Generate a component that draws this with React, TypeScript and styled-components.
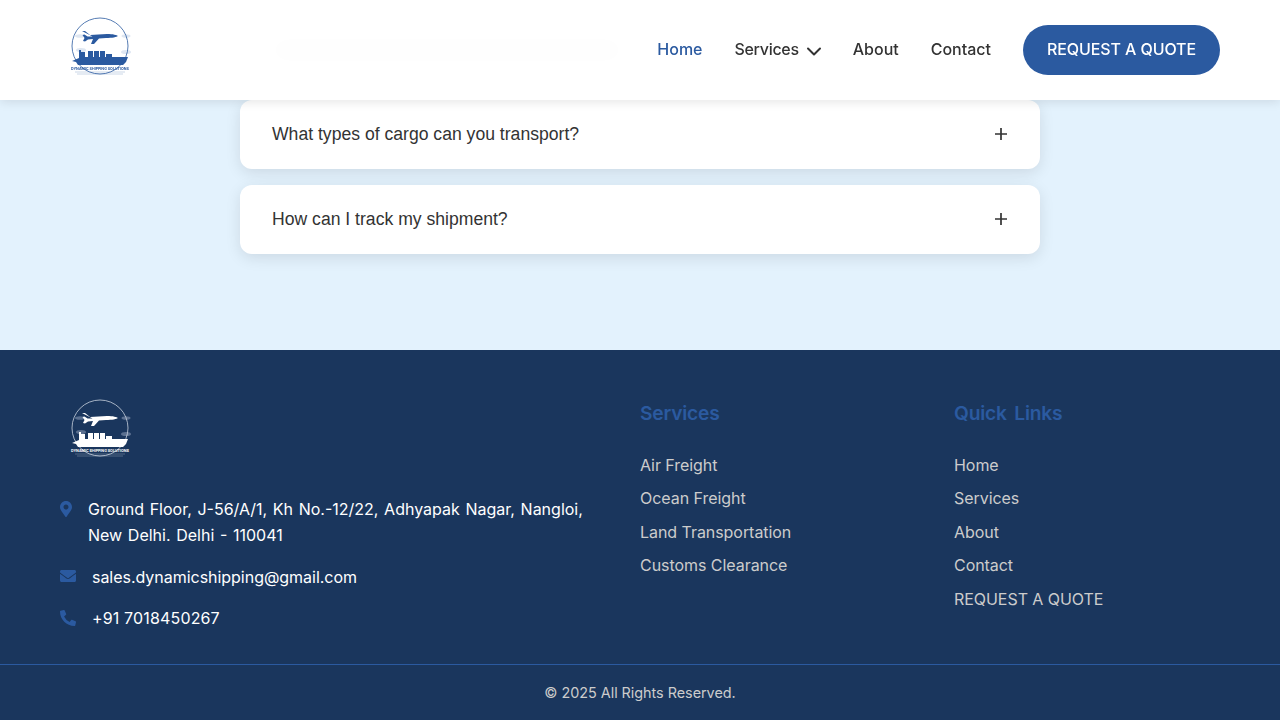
import React from "react";
import styled, { createGlobalStyle } from "styled-components";
import { FaEnvelope, FaMapMarkerAlt, FaPhoneAlt } from "react-icons/fa";

const Global = createGlobalStyle`
  html, body { margin: 0; padding: 0; height: 720px; overflow: hidden; }
  * { box-sizing: border-box; }
  body {
    font-family: Inter, "Liberation Sans", sans-serif;
    font-optical-sizing: none;
    color: #333;
    background: #e3f2fd;
  }
`;

const Page = styled.div`
  position: relative;
  width: 1280px;
  height: 720px;
  overflow: hidden;
`;

const Header = styled.header`
  position: absolute;
  top: 0;
  left: 0;
  width: 100%;
  height: 100px;
  padding: 0 60px;
  display: flex;
  align-items: center;
  justify-content: space-between;
  background: rgba(255, 255, 255, 0.98);
  backdrop-filter: blur(10px);
  box-shadow: 0 2px 10px rgba(0, 0, 0, 0.1);
  z-index: 2;
`;

const LogoBox = styled.svg`
  display: block;
  width: 80px;
  height: 80px;
  flex: none;
`;

const HeaderLogo = styled(LogoBox)`
  margin-top: -8px;
`;

const Nav = styled.nav`
  display: flex;
  align-items: center;
  gap: 32px;
`;

const NavLink = styled.a<{ $active?: boolean }>`
  display: flex;
  align-items: center;
  gap: 7px;
  padding-bottom: 2px;
  font-size: 16px;
  font-weight: 500;
  color: ${(p) => (p.$active ? "#2b5aa0" : "#333")};
  svg {
    margin: 3px -1px 0 0;
  }
`;

const TightLabel = styled.span`
  letter-spacing: -0.3px;
`;

const QuoteButton = styled.a`
  display: flex;
  align-items: center;
  justify-content: center;
  height: 50px;
  padding: 0 24px 2px;
  border-radius: 25px;
  background: #2b5aa0;
  color: #fff;
  font-size: 16px;
  font-weight: 500;
  letter-spacing: -0.1px;
`;

const FaqSection = styled.section`
  height: 350px;
  padding-top: 15px;
  background: #e3f2fd;
`;

const FaqList = styled.div`
  width: 800px;
  margin: 0 auto;
  display: flex;
  flex-direction: column;
  gap: 16px;
`;

const FaqCard = styled.div`
  height: 69px;
  padding: 0 32px;
  display: flex;
  align-items: center;
  justify-content: space-between;
  background: #fff;
  border-radius: 12px;
  box-shadow: 0 4px 15px rgba(0, 0, 0, 0.1);
  font-family: "Liberation Sans", Arial, sans-serif;
  font-size: 17.6px;
  color: #333;
  svg {
    margin: -2px 1px 0 0;
  }
`;

const GhostLine = styled.span`
  display: block;
  width: 350px;
  height: 18px;
  border-radius: 4px;
  background: #999;
`;

const Footer = styled.footer`
  height: 370px;
  background: #1a365d;
  color: #fff;
  display: flex;
  flex-direction: column;
`;

const FooterGrid = styled.div`
  flex: 1;
  padding: 38px 60px 0;
  display: grid;
  grid-template-columns: 2fr 1fr 1fr;
  gap: 48px;
`;

const Brand = styled.div`
  display: flex;
  flex-direction: column;
`;

const ContactList = styled.div`
  margin-top: 29.3px;
  display: flex;
  flex-direction: column;
  gap: 16px;
`;

const ContactRow = styled.div`
  display: flex;
  align-items: flex-start;
  gap: 16px;
  font-size: 16px;
  line-height: 25.6px;
  color: #fff;
  svg {
    flex: none;
    margin-top: 3.5px;
    color: #2b5aa0;
    font-size: 16px;
  }
  svg.narrow {
    width: 12px;
  }
`;

const AddressText = styled.span`
  word-spacing: 1.15px;
`;

const EmailText = styled.span`
  display: block;
  margin: 1px 0 -1px;
  letter-spacing: -0.03px;
`;

const PhoneText = styled.span`
  letter-spacing: 0.15px;
`;

const Column = styled.div`
  padding-top: 12px;
`;

const ColumnTitle = styled.h3`
  margin: 0 0 25.5px;
  font-size: 19.2px;
  line-height: 27px;
  font-weight: 600;
  letter-spacing: -0.2px;
  word-spacing: 3px;
  color: #2b5aa0;
`;

const LinkList = styled.ul`
  margin: 0;
  padding: 0;
  list-style: none;
`;

const LinkItem = styled.li`
  height: 33.5px;
  font-size: 16px;
  line-height: 25px;
  letter-spacing: -0.05px;
  color: #ccc;
`;

const BottomBar = styled.div`
  height: 56px;
  border-top: 1px solid #2b5aa0;
  display: flex;
  align-items: center;
  justify-content: center;
  font-size: 14.4px;
  letter-spacing: -0.03px;
  color: #ccc;
`;

const Chevron = () => (
  <svg width="16" height="16" viewBox="0 0 16 16" fill="none" stroke="currentColor" strokeWidth="2" strokeLinecap="round" strokeLinejoin="round">
    <path d="M2 5.5 8 11.5 14 5.5" />
  </svg>
);

const Plus = () => (
  <svg width="12" height="12" viewBox="0 0 12 12" fill="none" stroke="#333" strokeWidth="1.7">
    <path d="M0 6H12M6 0V12" />
  </svg>
);

const Logo = ({ color, ring, cloud, Box }: { color: string; ring: string; cloud: string; Box: typeof LogoBox }) => (
  <Box viewBox="0 0 80 80" role="img" aria-label="Dynamic Shipping Solutions logo">
    <g fill={cloud}>
      <ellipse cx="20" cy="30" rx="5" ry="1.8" />
      <ellipse cx="66" cy="30" rx="4.5" ry="1.8" />
      <ellipse cx="21" cy="44" rx="5" ry="2" />
      <ellipse cx="66" cy="46" rx="5" ry="2" />
    </g>
    <circle cx="40" cy="40" r="28" fill="none" stroke={ring} strokeWidth="0.8" />
    <path fill={color} d="M22 25l3 0 5 4 17-1c6 0 10 1 11 2-1 1-6 2-12 2l-7 .5-5 5.5-3 0 2-5-5 .5-3 2-2-.5 1.5-3-2-3 2-.5 3 2 5 0z" />
    <path fill={color} d="M19 44h2v2h4v5h3v-6h5v6h1v-6h5v6h1v-6h5v6h1v-3h6v3h16l-2 5-3 3H18l-2-3-4-1 7-3z" />
    <text x="40" y="63.5" textAnchor="middle" fontFamily="Inter, sans-serif" fontSize="4.1" fontWeight="700" fill={color} textLength="58" lengthAdjust="spacingAndGlyphs">DYNAMIC SHIPPING SOLUTIONS</text>
    <path stroke={color} strokeWidth="0.8" opacity="0.3" d="M15 66H65M17 68H63" />
  </Box>
);

const services = ["Air Freight", "Ocean Freight", "Land Transportation", "Customs Clearance"];
const quickLinks = ["Home", "Services", "About", "Contact", "REQUEST A QUOTE"];
const faqs = ["What types of cargo can you transport?", "How can I track my shipment?"];

export default function App() {
  return (
    <Page>
      <Global />
      <Header>
        <Logo color="#2b5aa0" ring="#2b5aa0" cloud="#dfe7f2" Box={HeaderLogo} />
        <Nav>
          <NavLink $active>Home</NavLink>
          <NavLink><TightLabel>Services</TightLabel><Chevron /></NavLink>
          <NavLink>About</NavLink>
          <NavLink>Contact</NavLink>
          <QuoteButton>REQUEST A QUOTE</QuoteButton>
        </Nav>
      </Header>
      <FaqSection>
        <FaqList>
          <FaqCard>
            <GhostLine />
            <Plus />
          </FaqCard>
          {faqs.map((q) => (
            <FaqCard key={q}>
              {q}
              <Plus />
            </FaqCard>
          ))}
        </FaqList>
      </FaqSection>
      <Footer>
        <FooterGrid>
          <Brand>
            <Logo color="#ffffff" ring="#c9d2de" cloud="#5b7090" Box={LogoBox} />
            <ContactList>
              <ContactRow>
                <FaMapMarkerAlt className="narrow" />
                <AddressText>Ground Floor, J-56/A/1, Kh No.-12/22, Adhyapak Nagar, Nangloi,<br />New Delhi. Delhi - 110041</AddressText>
              </ContactRow>
              <ContactRow>
                <FaEnvelope />
                <EmailText>sales.dynamicshipping@gmail.com</EmailText>
              </ContactRow>
              <ContactRow>
                <FaPhoneAlt />
                <PhoneText>+91 7018450267</PhoneText>
              </ContactRow>
            </ContactList>
          </Brand>
          <Column>
            <ColumnTitle>Services</ColumnTitle>
            <LinkList>
              {services.map((s) => <LinkItem key={s}>{s}</LinkItem>)}
            </LinkList>
          </Column>
          <Column>
            <ColumnTitle>Quick Links</ColumnTitle>
            <LinkList>
              {quickLinks.map((s) => <LinkItem key={s}>{s}</LinkItem>)}
            </LinkList>
          </Column>
        </FooterGrid>
        <BottomBar>© 2025 All Rights Reserved.</BottomBar>
      </Footer>
    </Page>
  );
}
